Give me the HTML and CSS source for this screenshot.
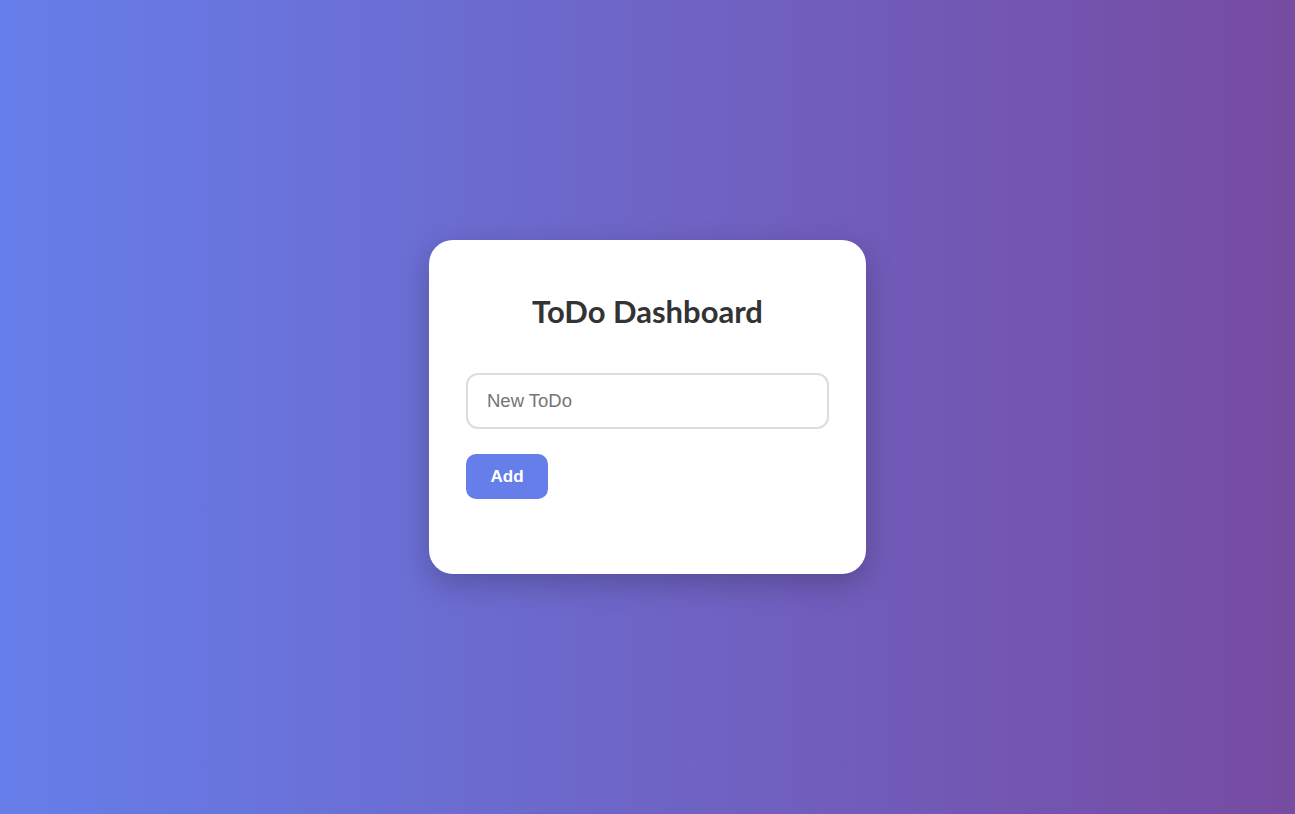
FILE: index.html
```html
<!DOCTYPE html>
<html lang="en">
<head>
<meta charset="utf-8">
<title>ToDo Dashboard</title>
<link rel="stylesheet" href="styles.css">
</head>
<body>
  <main class="card">
    <h1 class="title">ToDo Dashboard</h1>
    <input class="todo-input" type="text" placeholder="New ToDo">
    <div class="actions">
      <button class="add-btn" type="button">Add</button>
    </div>
    <ul class="todo-list"></ul>
  </main>
</body>
</html>
```

FILE: styles.css
```css
* { box-sizing: border-box; }
html, body { height: 100%; }
body {
  margin: 0;
  background: linear-gradient(to right, #667eea, #764ba2);
  display: flex;
  align-items: center;
  justify-content: center;
  font-family: "Liberation Sans", Arial, sans-serif;
}
.card {
  width: 437px;
  height: 334px;
  background: #fff;
  border-radius: 24px;
  padding: 50px 37px 0;
  box-shadow: 0 10px 30px rgba(0, 0, 0, 0.22);
  display: flex;
  flex-direction: column;
}
.title {
  margin: 0 0 41px;
  text-align: center;
  font-family: "Segoe UI", Lato, "Open Sans", sans-serif;
  font-weight: 700;
  font-size: 31px;
  line-height: 42px;
  color: #333;
}
.todo-input {
  width: 363px;
  height: 56px;
  border: 2px solid #ddd;
  border-radius: 12px;
  padding: 0 19px;
  font-family: "Liberation Sans", Arial, sans-serif;
  font-size: 18.5px;
  color: #333;
  outline: none;
}
.todo-input::placeholder { color: #757575; }
.actions { margin-top: 25px; display: flex; }
.add-btn {
  width: 82px;
  height: 45px;
  border: none;
  border-radius: 10px;
  background: #667eea;
  color: #fff;
  font-family: "Liberation Sans", Arial, sans-serif;
  font-weight: 700;
  font-size: 17px;
  cursor: pointer;
}
.todo-list { list-style: none; margin: 0; padding: 0; }
```
